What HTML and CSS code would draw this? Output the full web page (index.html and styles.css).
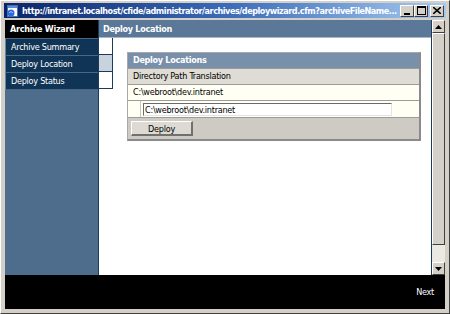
FILE: index.html
```html
<!DOCTYPE html>
<html>
<head>
  <meta charset="utf-8">
  <link rel="stylesheet" href="styles.css">
</head>
<body>
<div class="window">
  <div class="titlebar">
    <svg class="title-icon" width="14" height="14" viewBox="0 0 14 14">
      <rect x="1.5" y="1.5" width="10" height="11" fill="#fff" stroke="#4a6ea8"/>
      <rect x="2" y="2" width="9" height="2" fill="#5a8ad8"/>
      <circle cx="5" cy="9" r="3.5" fill="#2a6ad8"/>
      <path d="M3 9 q2 -3 4 0" stroke="#8fd0ff" fill="none"/>
    </svg>
    <span class="title-text">http://intranet.localhost/cfide/administrator/archives/deploywizard.cfm?archiveFileName...</span>
    <div class="title-buttons">
      <span class="tbtn"><svg width="8" height="8" viewBox="0 0 8 8"><rect x="1" y="6" width="6" height="2" fill="#000"/></svg></span>
      <span class="tbtn"><svg width="9" height="9" viewBox="0 0 9 9"><rect x="0.5" y="0.5" width="8" height="8" fill="none" stroke="#000"/><rect x="0" y="0" width="9" height="2" fill="#000"/></svg></span>
      <span class="tbtn close"><svg width="8" height="7" viewBox="0 0 8 7"><path d="M0 0 L8 7 M8 0 L0 7" stroke="#000" stroke-width="1.6"/></svg></span>
    </div>
  </div>

  <div class="client">
    <div class="main">
      <div class="sidebar">
        <div class="side-head">Archive Wizard</div>
        <ul class="steps">
          <li>Archive Summary</li>
          <li>Deploy Location</li>
          <li>Deploy Status</li>
        </ul>
      </div>

      <div class="page">
        <div class="page-col">
          <div class="page-head">Deploy Location</div>
          <div class="page-body">
            <div class="tabs">
              <span class="tab"></span>
              <span class="tab active"></span>
              <span class="tab"></span>
            </div>
            <div class="panel">
              <div class="panel-head">Deploy Locations</div>
              <div class="row sub">Directory Path Translation</div>
              <div class="row cream">C:\webroot\dev.intranet</div>
              <div class="row cream split">
                <span class="gutter"></span>
                <span class="field"><input type="text" value="C:\webroot\dev.intranet"></span>
              </div>
              <div class="row actions"><button>Deploy</button></div>
            </div>
          </div>
        </div>
        <div class="scrollbar">
          <span class="sb-btn"><svg width="7" height="4" viewBox="0 0 7 4"><path d="M3.5 0 L7 4 L0 4 Z" fill="#000"/></svg></span>
          <span class="sb-thumb"></span>
          <span class="sb-track"></span>
          <span class="sb-btn"><svg width="7" height="4" viewBox="0 0 7 4"><path d="M0 0 L7 0 L3.5 4 Z" fill="#000"/></svg></span>
        </div>
      </div>
    </div>

    <div class="footer">
      <span class="next">Next</span>
    </div>
  </div>
</div>
</body>
</html>
```

FILE: styles.css
```css
/* окно в стиле классической темы */

body {
  margin: 0;
  font-family: "DejaVu Sans Condensed", "DejaVu Sans", sans-serif;
  font-size: 9px;
  letter-spacing: -0.25px;
}

.window {
  width: 450px;
  height: 314px;
  box-sizing: border-box;
  padding: 3px 4px 4px 4px;
  background-color: #d4d0c8;
  display: flex;
  flex-direction: column;
  border-top: 1px solid #fff;
  border-left: 1px solid #fff;
  border-right: 1px solid #404040;
  border-bottom: 1px solid #404040;
}

.titlebar {
  height: 15px;
  margin: -1px -1px 0 -1px;
  background: linear-gradient(to right, #0a246a, #3a6ab8 50%, #a6caf0);
  display: flex;
  align-items: center;
  padding: 0 2px 0 2px;
}

.title-icon {
  flex: none;
  margin-right: 2px;
}

.title-text {
  flex: 1;
  color: #fff;
  font-weight: bold;
  white-space: nowrap;
  overflow: hidden;
  letter-spacing: -0.46px;
}

.title-buttons {
  display: flex;
  flex: none;
}

.tbtn {
  width: 14px;
  height: 12px;
  box-sizing: border-box;
  background-color: #d4d0c8;
  border-top: 1px solid #fff;
  border-left: 1px solid #fff;
  border-right: 1px solid #404040;
  border-bottom: 1px solid #404040;
  display: flex;
  align-items: center;
  justify-content: center;
}

.tbtn.close {
  margin-left: 2px;
}

.client {
  margin-top: 2px;
  flex: 1;
  display: flex;
  flex-direction: column;
  min-height: 0;
}

.main {
  flex: 1;
  display: flex;
  min-height: 0;
}

.sidebar {
  width: 93px;
  background-color: #4e6d8d;
  border-right: 1px solid #1c3a5c;
}

.side-head {
  height: 18px;
  line-height: 18px;
  background-color: #000;
  color: #fff;
  font-weight: bold;
  padding-left: 5px;
  letter-spacing: -0.3px;
}

.steps {
  list-style: none;
  margin: 0;
  padding: 0;
}

.steps li {
  height: 16px;
  line-height: 16px;
  padding-left: 5px;
  color: #fff;
  background-color: #0f3455;
  border-top: 1px solid #4a6886;
  border-left: 1px solid #6a86a2;
}

.steps li:last-child {
  border-bottom: 1px solid #4a6886;
}

.page {
  flex: 1;
  display: flex;
  min-width: 0;
}

.page-col {
  flex: 1;
  display: flex;
  flex-direction: column;
  background-color: #fff;
}

.page-head {
  height: 18px;
  line-height: 18px;
  background-color: #5b7898;
  color: #fff;
  font-weight: bold;
  padding-left: 4px;
  border-bottom: 1px solid #a9b8c8;
  box-sizing: border-box;
  letter-spacing: -0.3px;
}

.page-body {
  flex: 1;
  display: flex;
  align-items: flex-start;
}

.tabs {
  display: flex;
  flex-direction: column;
  width: 14px;
}

.tab {
  height: 17px;
  box-sizing: border-box;
  border: 1px solid #1c3a5c;
  border-left: none;
  border-top: none;
  background-color: #fff;
}

.tab.active {
  background-color: #c9d3de;
}

.panel {
  margin: 14px 0 0 14px;
  width: 291px;
  border: 1px solid #9a9a9a;
  border-right-width: 2px;
  border-bottom-width: 2px;
  border-color: #a8a8a8 #8a8a8a #8a8a8a #a8a8a8;
}

.panel-head {
  height: 15px;
  line-height: 15px;
  background-color: #7890aa;
  color: #fff;
  font-weight: bold;
  padding-left: 5px;
  letter-spacing: -0.3px;
}

.row {
  height: 15px;
  line-height: 15px;
  border-top: 1px solid #9c9c9c;
  padding-left: 5px;
  color: #000;
}

.row.sub {
  background-color: #dedcd4;
}

.row.cream {
  background-color: #fffff4;
}

.row.split {
  height: 16px;
  display: flex;
  padding-left: 0;
}

.gutter {
  width: 12px;
  border-right: 1px solid #c8c8c0;
}

.field {
  padding: 2px 0 0 2px;
}

.field input {
  display: block;
  width: 249px;
  height: 13px;
  box-sizing: border-box;
  margin: 0;
  padding: 0 1px;
  font: inherit;
  letter-spacing: inherit;
  line-height: 11px;
  border-top: 1px solid #6a6a6a;
  border-left: 1px solid #6a6a6a;
  border-right: 1px solid #e4e4e4;
  border-bottom: 1px solid #e4e4e4;
  background-color: #fff;
  color: #000;
}

.row.actions {
  height: 21px;
  padding-left: 3px;
  background-color: #cdcbc3;
  display: flex;
  align-items: center;
}

.row.actions button {
  width: 62px;
  height: 15px;
  padding: 0;
  font: inherit;
  letter-spacing: inherit;
  color: #000;
  background-color: #dcdad2;
  border-top: 1px solid #fff;
  border-left: 1px solid #fff;
  border-right: 2px solid #707070;
  border-bottom: 2px solid #707070;
}

.scrollbar {
  width: 13px;
  display: flex;
  flex-direction: column;
  border-left: 1px solid #1c3a5c;
  background-color: #ebe9e4;
}

.sb-btn,
.sb-thumb {
  background-color: #d4d0c8;
  box-sizing: border-box;
  border-top: 1px solid #fff;
  border-left: 1px solid #fff;
  border-right: 1px solid #404040;
  border-bottom: 1px solid #404040;
}

.sb-btn {
  height: 13px;
  display: flex;
  align-items: center;
  justify-content: center;
}

.sb-thumb {
  height: 212px;
}

.sb-track {
  flex: 1;
}

.footer {
  height: 34px;
  background-color: #000;
  display: flex;
  align-items: center;
  justify-content: flex-end;
  padding-right: 11px;
}

.next {
  color: #fff;
}
```
